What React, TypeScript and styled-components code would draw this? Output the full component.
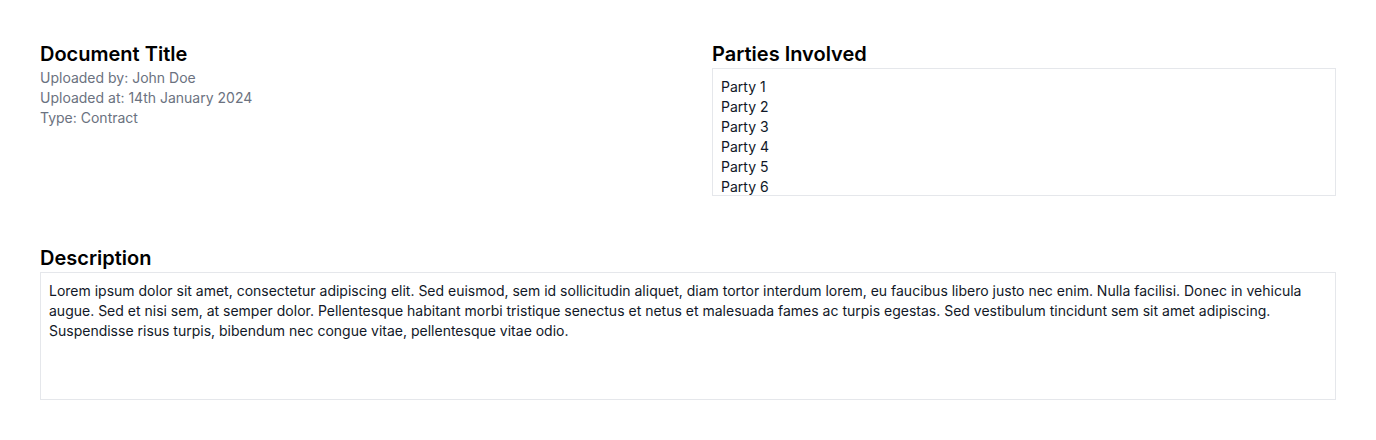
import React from "react"
import styled, { createGlobalStyle } from "styled-components"

const GlobalStyle = createGlobalStyle`
	body {
		margin: 0;
		background: #ffffff;
		font-family: Inter, "Noto Sans", sans-serif;
		color: #000000;
	}
`

const Page = styled.div`
	padding: 40px;
	display: grid;
	grid-template-columns: 1fr 1fr;
	gap: 48px;
`

const Section = styled.section<{ $wide?: boolean }>`
	display: flex;
	flex-direction: column;
	grid-column: ${(props) => (props.$wide ? "1 / -1" : "auto")};
`

const Heading = styled.h2`
	margin: 0;
	font-size: 20px;
	line-height: 28px;
	font-weight: 600;
`

const Meta = styled.p`
	margin: 0;
	font-size: 14px;
	line-height: 20px;
	color: #6b7280;
`

const Box = styled.div`
	height: 128px;
	box-sizing: border-box;
	padding: 8px;
	border: 1px solid #e5e7eb;
	overflow: hidden;
	font-size: 14px;
	line-height: 20px;
	color: #111827;
`

const PartyList = styled.ul`
	list-style: none;
	margin: 0;
	padding: 0;
`

const Party = styled.li`
	margin: 0;
`

const Text = styled.p`
	margin: 0;
`

const parties = ["Party 1", "Party 2", "Party 3", "Party 4", "Party 5", "Party 6"]

const description =
	"Lorem ipsum dolor sit amet, consectetur adipiscing elit. Sed euismod, sem id sollicitudin aliquet, diam tortor interdum lorem, eu faucibus libero justo nec enim. Nulla facilisi. Donec in vehicula augue. Sed et nisi sem, at semper dolor. Pellentesque habitant morbi tristique senectus et netus et malesuada fames ac turpis egestas. Sed vestibulum tincidunt sem sit amet adipiscing. Suspendisse risus turpis, bibendum nec congue vitae, pellentesque vitae odio."

export default function App() {
	return (
		<>
			<GlobalStyle />
			<Page>
				<Section>
					<Heading>Document Title</Heading>
					<Meta>Uploaded by: John Doe</Meta>
					<Meta>Uploaded at: 14th January 2024</Meta>
					<Meta>Type: Contract</Meta>
				</Section>
				<Section>
					<Heading>Parties Involved</Heading>
					<Box>
						<PartyList>
							{parties.map((party) => (
								<Party key={party}>{party}</Party>
							))}
						</PartyList>
					</Box>
				</Section>
				<Section $wide>
					<Heading>Description</Heading>
					<Box>
						<Text>{description}</Text>
					</Box>
				</Section>
			</Page>
		</>
	)
}
